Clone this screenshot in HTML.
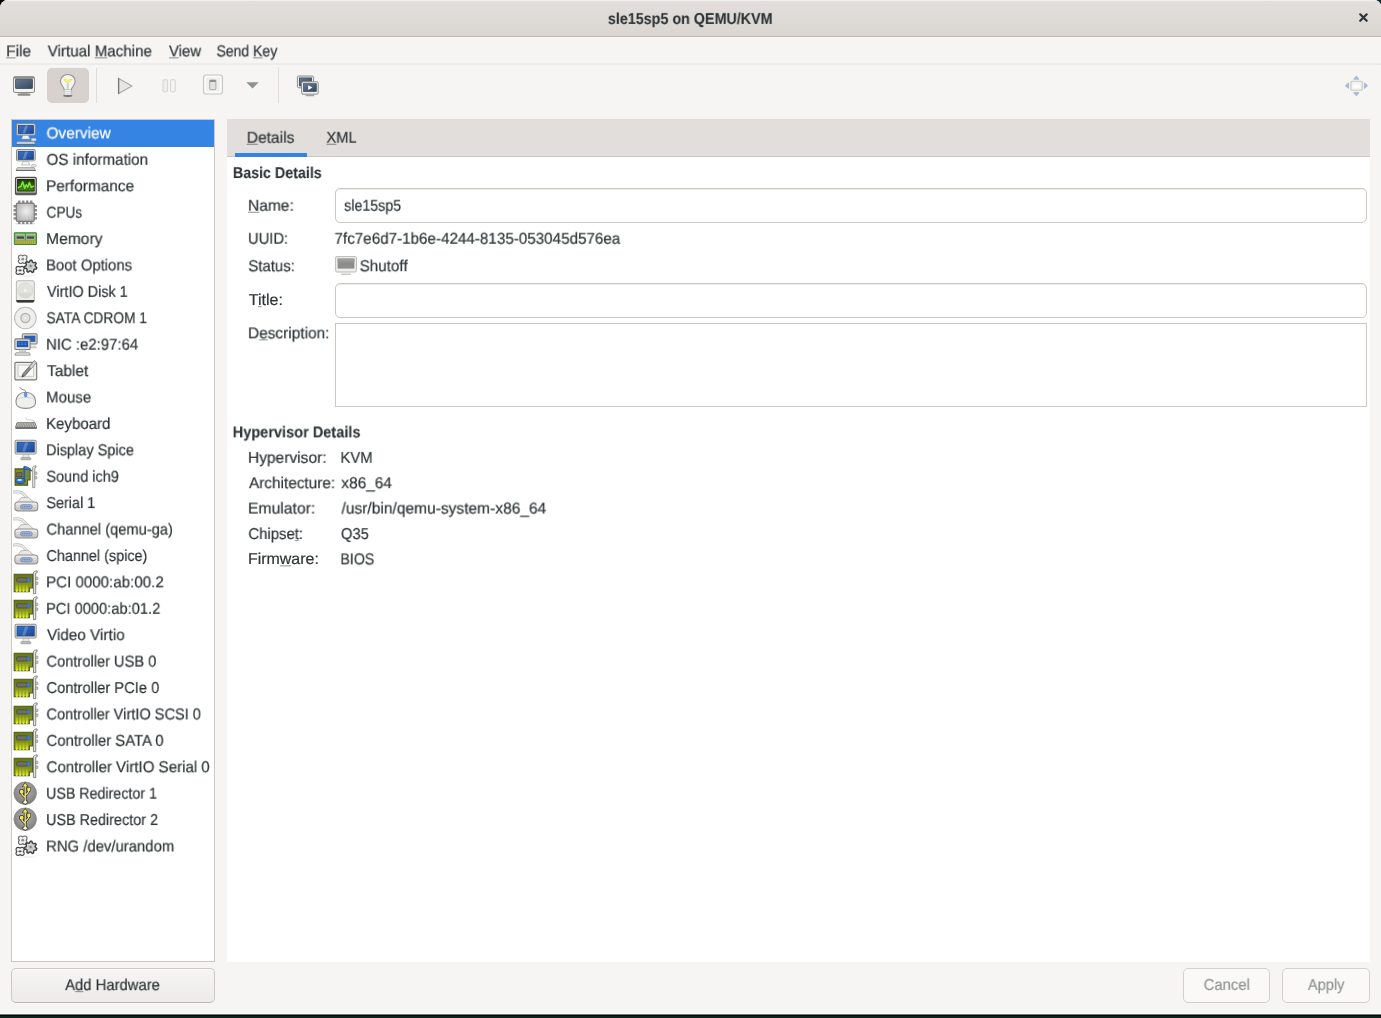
<!DOCTYPE html>
<html lang="en">
<head>
<meta charset="utf-8">
<title>sle15sp5 on QEMU/KVM</title>
<style>
html,body{margin:0;padding:0;}
body{width:1381px;height:1018px;overflow:hidden;background:#000;font-family:"Liberation Sans",sans-serif;font-size:15.8px;color:#2e3436;}
#win{position:absolute;left:0;top:0;width:1381px;height:1018px;background:#f6f5f4;border-radius:8px 7px 0 0 / 8px 6px 0 0;overflow:hidden;}
#win div,#win svg,#win span{position:absolute;}
.t{will-change:transform;text-rendering:geometricPrecision;-webkit-text-stroke:0.2px currentColor;line-height:20px;height:20px;white-space:pre;transform-origin:0 0;display:block;}
.t u{text-decoration:underline;text-decoration-thickness:1px;text-underline-offset:1px;text-decoration-color:rgba(46,52,54,.55);}
#titlebar{left:0;top:0;width:1381px;height:36px;background:linear-gradient(#e2dfdc,#dad6d2);border-bottom:1px solid #c3bab4;box-shadow:inset 0 1px 0 #f1f0ee;}
#menuline{left:0;top:63px;width:1381px;height:2px;background:linear-gradient(#eeedeb,#ecebe9);}
#tog{left:47px;top:68px;width:42px;height:35px;border-radius:5px;background:#d7d2ce;}
.vsep{top:68px;width:1px;height:35px;background:#dedbd8;}
#side{left:11px;top:119px;width:202px;height:841px;background:#fff;border:1px solid #cdc7c2;}
#sel{left:12px;top:120px;width:202px;height:26.5px;background:#3584e4;}
#nb{left:227px;top:119px;width:1143px;height:843px;background:#fff;}
#nbh{left:227px;top:119px;width:1143px;height:37px;background:#e1dedb;border-bottom:1px solid #cdc7c2;}
#tabsel{left:235px;top:153px;width:72px;height:4px;background:#3584e4;}
.entry{background:#fff;border:1px solid #cdc7c2;border-radius:5px;box-sizing:border-box;box-shadow:inset 0 1px 0 #eeecea;}
.btn{box-sizing:border-box;border:1px solid #cdc7c2;border-bottom-color:#bfb8b1;border-radius:5px;background:linear-gradient(#f6f5f4,#edebe9);box-shadow:inset 0 1px 0 #fff;}
.btn.dis{background:#faf9f8;border-color:#d5d0cc;box-shadow:none;}
#bottomline{left:0;top:1013px;width:1381px;height:5px;background:linear-gradient(#fcfcfb 0,#fcfcfb 1px,#777 1px,#777 2px,#020a09 2px,#020a09 3px,#0a2420 3px);}
</style>
</head>
<body>
<svg width="0" height="0" style="position:absolute"><defs><linearGradient id="gScr" x1="0" y1="0" x2="1" y2="1"><stop offset="0" stop-color="#3a6fc4"/><stop offset=".5" stop-color="#2a5fb4"/><stop offset="1" stop-color="#1a4394"/></linearGradient>
<linearGradient id="gFrm" x1="0" y1="0" x2="0" y2="1"><stop offset="0" stop-color="#f4f4f2"/><stop offset="1" stop-color="#d3d3cf"/></linearGradient>
<linearGradient id="gDark" x1="0" y1="0" x2="1" y2="1"><stop offset="0" stop-color="#6a7c92"/><stop offset="1" stop-color="#32465e"/></linearGradient>
<radialGradient id="gChip" cx=".55" cy=".45" r=".7"><stop offset="0" stop-color="#f2f2f2"/><stop offset="1" stop-color="#a9a9a9"/></radialGradient>
<radialGradient id="gUsb" cx=".5" cy=".4" r=".6"><stop offset="0" stop-color="#b4b4b4"/><stop offset="1" stop-color="#7d7d7d"/></radialGradient>
<linearGradient id="gPci" x1="0" y1="0" x2="0" y2="1"><stop offset="0" stop-color="#667614"/><stop offset=".5" stop-color="#7f8f1a"/><stop offset="1" stop-color="#98a81c"/></linearGradient>
<linearGradient id="gYel" gradientUnits="userSpaceOnUse" x1="0" y1="14" x2="0" y2="21"><stop offset="0" stop-color="#b8c822" stop-opacity=".3"/><stop offset="1" stop-color="#f0fa3c"/></linearGradient>
<linearGradient id="gGrn" x1="0" y1="0" x2="0" y2="1"><stop offset="0" stop-color="#1d3a0a"/><stop offset="1" stop-color="#3f8a12"/></linearGradient>
<linearGradient id="gCon" x1="0" y1="0" x2="0" y2="1"><stop offset="0" stop-color="#f4f4f4"/><stop offset="1" stop-color="#bdbdbd"/></linearGradient>
<symbol id="i-computer" viewBox="0 0 24 24" overflow="visible"><g transform="translate(0.1 -0.2)"><g><rect x="3.2" y="2.7" width="17.7" height="10.5" rx="1.3" fill="url(#gFrm)" stroke="#8a8a85" stroke-width="1"/>
<path d="M3.4 12.2h17.300v.6a.8.800 0 0 1-.8.800H4.200a.8.800 0 0 1-.8-.8z" fill="#b9b9b4"/>
<rect x="4.800" y="4.300" width="14.500" height="7.600" fill="url(#gScr)" stroke="#15336e" stroke-width=".6"/>
<path d="M11.400 4.500h2.800l-2.800 7.200H9z" fill="#fff" opacity=".25"/>
<path d="M9.300 14h5.200l1.300 3.300H8z" fill="#f4f4f2" stroke="#a4a4a0" stroke-width=".6"/>
<ellipse cx="19.500" cy="17.900" rx="2.500" ry="1.300" fill="#e4e6ea" stroke="#a9adb6" stroke-width=".6"/>
<path d="M4 19.800h15.800l1.400 2.600H2.800z" fill="#ecece9" stroke="#8a8a86" stroke-width=".8"/>
<path d="M4.600 20.700h14.600M4.200 21.500h15.400" stroke="#a7a7a3" stroke-width=".5" stroke-dasharray="1 .5"/>
<path d="M2.800 22.400h18.400" stroke="#5e5e5b" stroke-width=".8"/></g></g></symbol>
<symbol id="i-perf" viewBox="0 0 24 24" overflow="visible"><g transform="translate(0.5 -0.3)"><rect x="1.900" y="4.400" width="19.600" height="16.300" rx="1.300" fill="#d4d4d2" stroke="#4c4c4a" stroke-width="1.200"/>
<path d="M1.900 18.800h19.600v1a1.300 1.300 0 0 1-1.300 1.300H3.200a1.300 1.300 0 0 1-1.300-1.300z" fill="#5a5a58"/>
<rect x="3.900" y="6.400" width="15.600" height="11" fill="url(#gGrn)" stroke="#0c1a05" stroke-width=".8"/>
<path d="M4.700 14l2.300-.9 1.700-4.500 1.800 6.200 1.500-3.300 1.500 2.200 1.500-4.300 1.700 4.400 2.200-1" fill="none" stroke="#7fe33a" stroke-width="1.500" stroke-linejoin="round" stroke-linecap="round"/></g></symbol>
<symbol id="i-cpu" viewBox="0 0 24 24" overflow="visible"><g transform="translate(0.19 -0.09)"><ellipse cx="11.300" cy="22.600" rx="10" ry="1" fill="#000" opacity=".12"/>
<g fill="#8a8a8a">
<path d="M4.600.5h2.200v4H4.600zM8.400.5h2.200v4H8.400zM12.200.5h2.200v4h-2.200zM16 .5h2.200v4H16zM4.600 18.800h2.200v4H4.600zM8.400 18.800h2.200v4H8.400zM12.200 18.800h2.200v4h-2.200zM16 18.800h2.200v4H16z"/>
<path d="M.3 4.900h4v2.200h-4zM.3 8.700h4v2.200h-4zM.3 12.500h4v2.200h-4zM.3 16.300h4v2.200h-4zM18.500 4.900h4v2.200h-4zM18.500 8.700h4v2.200h-4zM18.500 12.500h4v2.200h-4zM18.500 16.300h4v2.200h-4z"/>
</g>
<rect x="2.900" y="3.100" width="17" height="17.200" rx="1.400" fill="url(#gChip)" stroke="#7a7a7a" stroke-width="1.100"/></g></symbol>
<symbol id="i-memory" viewBox="0 0 24 24" overflow="visible"><g transform="translate(0.4 0.09) scale(0.9858)"><rect x=".9" y="6.500" width="21.200" height="11.200" rx=".8" fill="#6fb55e" stroke="#3a8a2c" stroke-width="1"/>
<rect x="1.800" y="7.400" width="19.400" height=".9" fill="#a9d89c"/>
<rect x="2.600" y="9" width="8" height="3.500" fill="#4a4644" stroke="#d8d4d0" stroke-width=".6"/>
<rect x="2.600" y="9" width="8" height="1" fill="#9a9694"/>
<rect x="12.400" y="9" width="8" height="3.500" fill="#4a4644" stroke="#d8d4d0" stroke-width=".6"/>
<rect x="12.400" y="9" width="8" height="1" fill="#9a9694"/>
<rect x="11" y="6.900" width="1" height="7" fill="#2fa42a"/>
<rect x="2" y="13.900" width="19" height="3.200" fill="#b9b548"/>
<path d="M3.300 13.900v3.200M5.300 13.900v3.200M7.300 13.900v3.200M9.300 13.900v3.200M11.300 13.900v3.200M13.300 13.900v3.200M15.300 13.900v3.200M17.300 13.900v3.200M19.300 13.900v3.200" stroke="#8f8a30" stroke-width=".6"/></g></symbol>
<symbol id="i-gears" viewBox="0 0 24 24" overflow="visible"><g transform=""><ellipse cx="13" cy="21.800" rx="9" ry="1" fill="#000" opacity=".05"/>
<circle cx="7.30" cy="4.00" r="2.65" fill="#707070"/><circle cx="11.10" cy="4.00" r="2.65" fill="#707070"/><circle cx="7.30" cy="7.80" r="2.65" fill="#707070"/><circle cx="11.10" cy="7.80" r="2.65" fill="#707070"/><rect x="7.30" y="4.00" width="3.80" height="3.80" fill="#707070"/><circle cx="7.30" cy="4.00" r="1.55" fill="#f2f2f2"/><circle cx="11.10" cy="4.00" r="1.55" fill="#f2f2f2"/><circle cx="7.30" cy="7.80" r="1.55" fill="#f2f2f2"/><circle cx="11.10" cy="7.80" r="1.55" fill="#f2f2f2"/><rect x="6.55" y="3.25" width="5.30" height="5.30" fill="#f2f2f2"/>
<circle cx="9.200" cy="5.900" r="1.300" fill="#8c8c8c"/>
<path d="M22.50 13.80L22.11 15.06L20.21 15.30L19.55 16.01L19.45 17.92L18.22 18.40L16.86 17.06L15.88 16.99L14.34 18.11L13.19 17.44L13.39 15.55L12.84 14.74L11.00 14.22L10.80 12.92L12.41 11.88L12.70 10.95L11.96 9.19L12.86 8.22L14.66 8.84L15.57 8.48L16.48 6.80L17.80 6.90L18.45 8.70L19.30 9.19L21.18 8.86L21.92 9.95L20.92 11.57L21.06 12.54Z" fill="#d6d9d4" stroke="#3e4245" stroke-width="1.400" stroke-linejoin="round"/>
<circle cx="16.700" cy="12.700" r="2.600" fill="#c4c8c2"/>
<circle cx="16.700" cy="12.300" r="1.100" fill="#7c8084"/>
<circle cx="4.90" cy="14.60" r="2.55" fill="#484848"/><circle cx="8.50" cy="14.60" r="2.55" fill="#484848"/><circle cx="4.90" cy="18.20" r="2.55" fill="#484848"/><circle cx="8.50" cy="18.20" r="2.55" fill="#484848"/><rect x="4.90" y="14.60" width="3.60" height="3.60" fill="#484848"/><circle cx="4.90" cy="14.60" r="1.45" fill="#f4f4f4"/><circle cx="8.50" cy="14.60" r="1.45" fill="#f4f4f4"/><circle cx="4.90" cy="18.20" r="1.45" fill="#f4f4f4"/><circle cx="8.50" cy="18.20" r="1.45" fill="#f4f4f4"/><rect x="4.15" y="13.85" width="5.10" height="5.10" fill="#f4f4f4"/>
<rect x="5.300" y="15.600" width="2.800" height="1.700" rx=".4" fill="#4a4a4a"/></g></symbol>
<symbol id="i-disk" viewBox="0 0 24 24" overflow="visible"><g transform="translate(-0.38 0.09) scale(0.9858)"><rect x="3.600" y="1.600" width="17.200" height="20.600" rx="1.600" fill="#ececea" stroke="#b9b9b5" stroke-width="1"/>
<path d="M3.600 20h17.200v.8a1.600 1.600 0 0 1-1.600 1.600H5.200a1.600 1.600 0 0 1-1.600-1.600z" fill="#3a3a3c"/>
<circle cx="12.200" cy="11" r="7.200" fill="#e2e2df" stroke="#d2d2ce" stroke-width=".6"/>
<path d="M5.500 13.500a7.200 7.200 0 0 0 13.400 0" fill="#d4d4d0" opacity=".7"/>
<circle cx="12.200" cy="11" r="1.200" fill="#f8f8f8"/></g></symbol>
<symbol id="i-cdrom" viewBox="0 0 24 24" overflow="visible"><g transform="translate(-0.38 0.09) scale(0.9858)"><circle cx="12.300" cy="12.400" r="10.400" fill="#efefed" stroke="#bcbcb9" stroke-width="1"/>
<circle cx="12.300" cy="12.400" r="4.300" fill="#e6e6e4" stroke="#b4b4b1" stroke-width="1.300"/>
<circle cx="12.300" cy="12.400" r="1.500" fill="#fafafa" stroke="#cfcfcc" stroke-width=".6"/></g></symbol>
<symbol id="i-nic" viewBox="0 0 24 24" overflow="visible"><g transform="translate(0.19 -0.09)"><rect x="8.6" y="1.8" width="14" height="9.6" rx="1" fill="#d8d8d4" stroke="#7e7e7a" stroke-width="1"/>
<rect x="10.4" y="3.6" width="10.6" height="5.8" fill="#2a5cb0"/>
<path d="M13 13.5h8l1 1.6h-9z" fill="#e8e8e6" stroke="#a0a09c" stroke-width=".5"/>
<rect x="1.6" y="6.6" width="14.4" height="10" rx="1" fill="#e2e2de" stroke="#7e7e7a" stroke-width="1"/>
<rect x="3.4" y="8.4" width="10.8" height="6" fill="#2458b0"/>
<path d="M4.5 10.4h8M4.5 12h8" stroke="#5d8ad8" stroke-width=".7" stroke-dasharray="2 1"/>
<path d="M6.5 17h5l.6 1.6H5.9z" fill="#e4e4e2" stroke="#a0a09c" stroke-width=".5"/>
<path d="M2.6 19.8h12.6l1 2.2H1.6z" fill="#eeeeec" stroke="#8a8a86" stroke-width=".8"/></g></symbol>
<symbol id="i-tablet" viewBox="0 0 24 24" overflow="visible"><g transform="translate(0.19 -0.09)"><rect x="1.6" y="4.2" width="20.6" height="16.6" rx="1.2" fill="#eeeeec" stroke="#7b7b78" stroke-width="1.1"/>
<rect x="4.6" y="6.8" width="14.6" height="10.6" fill="#f8f8f6" stroke="#c4c4c0" stroke-width=".8"/>
<path d="M8.2 18.2l1-3.2L20 2.6l2 1.6L11.2 16.8z" fill="#8a8a88" stroke="#5e5e5c" stroke-width=".7"/>
<path d="M15.2 8.6L20 2.6l2 1.6-4.8 6z" fill="#d2d4d8" stroke="#8a8e96" stroke-width=".7"/>
<path d="M8.2 18.2l.6-2 1.2 1z" fill="#333"/></g></symbol>
<symbol id="i-mouse" viewBox="0 0 24 24" overflow="visible"><g transform="translate(0.19 -0.09)"><path d="M6 2.4c2 .4 1.4 2 3.6 2.2 1.6.2 2.2.8 2.2 2.4" fill="none" stroke="#7a7a78" stroke-width=".9"/>
<path d="M2.6 16.2C2.6 10.6 6.4 7 11.8 7s9.400 3.600 9.400 9.200c0 4.200-4.200 6-9.400 6s-9.200-1.800-9.200-6z" fill="#efefed" stroke="#8d8d8a" stroke-width="1"/>
<path d="M3.8 13.6c2.400-1.400 5-1.800 8-1.800s5.800.4 8.200 1.800" fill="none" stroke="#cfcfcc" stroke-width=".8"/>
<ellipse cx="11.800" cy="9.200" rx="1.300" ry="2.300" fill="#5f9be6" stroke="#3a74c4" stroke-width=".5"/></g></symbol>
<symbol id="i-keyboard" viewBox="0 0 24 24" overflow="visible"><g transform="translate(0.19 -0.09)"><path d="M11.500 6.400c3.500.6-1.500 1.400 2.500 2 4.500.7 6.500.2 6 1.600-.4 1-2.600.6-3.200 1.800" fill="none" stroke="#c4c4c1" stroke-width=".8"/>
<path d="M3.600 11.200h17l1.600 4.600H2.200z" fill="#e0e0dd" stroke="#6e6e6b" stroke-width=".9"/>
<path d="M4.400 12.400h15.600M3.900 13.500h16.600M3.500 14.600h17.400" stroke="#5a5a58" stroke-width=".8" stroke-dasharray="1.100 .5"/>
<path d="M2.200 15.900h20v1H2.200z" fill="#4e4e4c"/></g></symbol>
<symbol id="i-display" viewBox="0 0 24 24" overflow="visible"><g transform="translate(-0.38 0.09) scale(0.9858)"><rect x="2.400" y="2" width="20.200" height="13.200" rx="1.200" fill="url(#gFrm)" stroke="#8c8c88" stroke-width="1"/>
<path d="M2.900 13.400h19.200v1a.8.800 0 0 1-.8.800H3.700a.8.800 0 0 1-.8-.8z" fill="#c4c4c0"/>
<rect x="4.200" y="3.800" width="16.600" height="9.500" fill="url(#gScr)" stroke="#17397a" stroke-width=".6"/>
<path d="M12 4.100h3.300L12 13H9z" fill="#fff" opacity=".22"/>
<path d="M10.400 15.700h4.800l.9 3.300H9.500z" fill="#e8e8e6" stroke="#a4a4a0" stroke-width=".6"/>
<rect x="7.800" y="18.900" width="9.800" height="1.900" rx=".9" fill="#c8c8c5" stroke="#8c8c88" stroke-width=".7"/></g></symbol>
<symbol id="i-sound" viewBox="0 0 24 24" overflow="visible"><g transform="translate(-0.38 0.09) scale(0.9858)"><path d="M2.400 4.600h14.400v10.600h-2.400v5H2.400z" fill="#7f8e1e" stroke="#4d580d" stroke-width="1"/>
<rect x="4" y="8.300" width="5" height="4" fill="#6b6b66" stroke="#3f3f3c" stroke-width=".6"/>
<rect x="13.800" y="8" width="1.600" height="1.600" fill="#3f7fd0"/><rect x="13.800" y="11" width="1.600" height="1.600" fill="#3f7fd0"/>
<path d="M19.300 3.300c0-1 1.200-1.600 3.200-1.600v1.400l-1.200.4v19.100h-2z" fill="#ececea" stroke="#858582" stroke-width=".8"/>
<path d="M21.300 7.600h2v2.200h-2zM21.300 12h2v2.200h-2z" fill="#d8d8d6" stroke="#858582" stroke-width=".6"/>
<path d="M11.200 2.400v13.400" stroke="#2a5aae" stroke-width="1.700"/>
<path d="M11.200 2c2.800.2 5.400 1.600 7.400 4.800-2.400-1.600-4.800-2-7.400-1.600z" fill="#3f78cc" stroke="#1f4b96" stroke-width=".6"/>
<ellipse cx="7.400" cy="16" rx="4.600" ry="2.700" fill="#3570c6" stroke="#1a4490" stroke-width=".8"/>
<ellipse cx="6.800" cy="15.300" rx="2.400" ry="1" fill="#cfe0f8"/></g></symbol>
<symbol id="i-serial" viewBox="0 0 24 24" overflow="visible"><g transform="translate(-0.38 0.09) scale(0.9858)"><path d="M1.200 1.800c5.500-.8 8.500.6 10.600 3.400l3.200 4" fill="none" stroke="#bdbdba" stroke-width="2.800" stroke-linecap="round"/>
<path d="M1.200 1.800c5.500-.8 8.500.6 10.600 3.400l3.200 4" fill="none" stroke="#ededeb" stroke-width="1.400" stroke-linecap="round"/>
<path d="M8 7.400l7-.6 6.400 5.800H4.200z" fill="#e9e9e7" stroke="#adadaa" stroke-width=".8"/>
<rect x="2.200" y="11.400" width="22" height="8.600" rx="3" fill="url(#gCon)" stroke="#8e8e8b" stroke-width="1"/>
<rect x="7.600" y="14" width="11.200" height="4" rx="1.800" fill="#9fb3d6" stroke="#7488ae" stroke-width=".8"/>
<path d="M9.200 16h8" stroke="#5f78a8" stroke-width="1" stroke-dasharray="1 .6"/>
<circle cx="5" cy="15.800" r=".9" fill="#fafafa" stroke="#aaa" stroke-width=".4"/><circle cx="21.400" cy="15.800" r=".9" fill="#fafafa" stroke="#aaa" stroke-width=".4"/></g></symbol>
<symbol id="i-pci" viewBox="0 0 24 24" overflow="visible"><g transform="translate(-0.38 0.09) scale(0.9858)"><path d="M1.500 3.900h17.600v13.200h-3v3.600H1.500z" fill="url(#gPci)" stroke="#4f5c0c" stroke-width="1"/>
<rect x="3.800" y="7.300" width="10.600" height="4.200" rx="1.200" fill="#6c6e66" stroke="#454741" stroke-width=".7"/>
<rect x="13.800" y="7.500" width="3.200" height="3.800" rx=".6" fill="#3f7fd0" stroke="#2a5aa0" stroke-width=".5"/>
<path d="M4.100 20v-5.200M7.300 20v-5.200M10.500 20v-5.200M13.700 20v-5.200" stroke="url(#gYel)" stroke-width="2" stroke-linecap="round"/>
<path d="M20 2.700c0-1 1.200-1.900 3.600-1.900v1.600l-1.400.5v19.700H20z" fill="#e4e4e2" stroke="#7d7d7a" stroke-width=".9"/>
<path d="M22.200 6.800h2v2.300h-2zM22.200 11.400h2v2.300h-2z" fill="#d4d4d2" stroke="#7d7d7a" stroke-width=".6"/></g></symbol>
<symbol id="i-usb" viewBox="0 0 24 24" overflow="visible"><g transform="translate(-0.38 0.09) scale(0.9858)"><circle cx="12.100" cy="11.600" r="10.800" fill="url(#gUsb)" stroke="#8a8a8a" stroke-width=".8"/>
<g fill="none" stroke="#35352c" stroke-linecap="round"><path d="M12.100 20.500V4.500" stroke-width="2.600"/><path d="M12.100 15.400c-3.200-1.400-3.400-2.600-3.400-4.600M12.100 13.400c3.200-1.400 3.400-3 3.400-5" stroke-width="2.400"/></g>
<g fill="#35352c"><path d="M12.100.9l3.300 4.700H8.800z"/><circle cx="8.700" cy="10.200" r="2.500"/><rect x="13.500" y="5.800" width="4.200" height="4.200" rx="1"/><path d="M12.100 17.500l3.200 2.700-3.200 2.700-3.200-2.700z"/></g>
<g fill="none" stroke="#f0e88c" stroke-linecap="round"><path d="M12.100 20.500V4.500" stroke-width="1.200"/><path d="M12.100 15.400c-3.200-1.400-3.400-2.600-3.400-4.600M12.100 13.400c3.200-1.400 3.400-3 3.400-5" stroke-width="1.100"/></g>
<path d="M12.100 1.800l2.300 3.300H9.800z" fill="#f6e65a"/>
<circle cx="8.700" cy="10.200" r="1.800" fill="#f6e65a"/>
<rect x="14.100" y="6.400" width="3" height="3" rx=".6" fill="#f6e65a"/>
<path d="M12.100 18.300l2.300 1.900-2.300 1.900-2.300-1.900z" fill="#fbf8d8"/></g></symbol>
</defs></svg>
<div style="position:absolute;right:0;top:0;width:8px;height:8px;background:linear-gradient(225deg,#0a2e28 0,#0a2e28 35%,#000 60%)"></div>
<div id="win">
<div id="titlebar"></div>
<svg style="left:1357px;top:11.200px" width="13" height="13" viewBox="0 0 13 13"><path d="M3.200 3.300l6.500 6.500M9.700 3.300l-6.500 6.500" stroke="#2e3436" stroke-width="2.200" stroke-linecap="round"/></svg>
<div id="menuline"></div>
<div id="tog"></div>
<div class="vsep" style="left:96px"></div>
<div class="vsep" style="left:278px"></div>
<!-- toolbar icons -->
<svg id="tb-console" style="left:12px;top:74px" width="24" height="24" viewBox="0 0 24 24">
<rect x="1.500" y="2.700" width="21" height="15.800" rx="1.500" fill="#f2f2f0" stroke="#8b8b88" stroke-width="1"/>
<rect x="1.500" y="2.700" width="21" height="2" rx="1" fill="#8e8e8b"/>
<rect x="3.500" y="5.200" width="17" height="9.300" rx=".6" fill="url(#gDark)" stroke="#2c3e55" stroke-width=".7"/>
<rect x="9" y="18.500" width="6" height="1.200" fill="#9a9a97"/>
<rect x="5.500" y="19.600" width="13" height="2.200" rx="1" fill="#8a8a87"/>
</svg>
<svg id="tb-bulb" style="left:58px;top:73px" width="20" height="25" viewBox="0 0 20 25">
<ellipse cx="9.800" cy="22.800" rx="4.600" ry=".9" fill="#2e3436" opacity=".8"/>
<path d="M9.800 1.500c-4.300 0-7.400 3-7.400 6.800 0 2.500 1.300 4.100 2.600 5.700.9 1.100 1.300 2 1.300 3.200h7c0-1.200.4-2.100 1.300-3.200 1.300-1.600 2.600-3.200 2.600-5.700 0-3.800-3.100-6.800-7.400-6.800z" fill="#f4f4f2" stroke="#929290" stroke-width="1.100"/>
<path d="M5.400 6.600c1.200-1.500 3-.7 4.400 1 1.400-1.700 3.200-2.500 4.400-1-.6 2-2.400 3-4.400 3s-3.800-1-4.400-3z" fill="#f0e84e"/>
<path d="M7 7.400c1-.4 2 .3 2.800 1.300.8-1 1.800-1.700 2.800-1.300" fill="none" stroke="#fffbd0" stroke-width=".8"/>
<path d="M8.800 10.600l1-1.800 1 1.800v5.600h-2z" fill="#c9c9c5" opacity=".8"/>
<rect x="6.200" y="16.600" width="7.200" height="5.400" rx="1.200" fill="#fafafa" stroke="#b1b1ae" stroke-width=".7"/>
<path d="M6.400 18.400h6.800M6.400 20.100h6.800" stroke="#c4c4c1" stroke-width=".7"/>
</svg>
<svg id="tb-play" style="left:116px;top:76px" width="18" height="20" viewBox="0 0 18 20">
<path d="M2.600 2.400L16 10 2.600 17.600z" fill="#e6e6e4" stroke="#a9a9a6" stroke-width="1.100" stroke-linejoin="round"/>
<path d="M2.600 2.400v15.200" stroke="#777775" stroke-width="1.300" stroke-linecap="round"/>
</svg>
<svg id="tb-pause" style="left:161px;top:78px" width="16" height="16" viewBox="0 0 16 16">
<rect x="2" y="1.800" width="4.600" height="12" rx=".8" fill="#eeeeec" stroke="#cfcfcc" stroke-width=".9"/>
<rect x="9.600" y="1.800" width="4.600" height="12" rx=".8" fill="#f4f4f2" stroke="#cfcfcc" stroke-width=".9"/>
</svg>
<svg id="tb-power" style="left:202px;top:73px" width="22" height="23" viewBox="0 0 22 23">
<rect x="1.600" y="2" width="18.800" height="19" rx="2.400" fill="#fbfbfa" stroke="#c3c3c0" stroke-width="1.100"/>
<rect x="4" y="4.400" width="14" height="14.200" rx="1" fill="#f0f0ee"/>
<rect x="7.700" y="7" width="6.200" height="9.600" rx=".8" fill="#e2e2e0" stroke="#a4a4a1" stroke-width=".9"/>
<rect x="7.700" y="7" width="6.200" height="2" rx=".6" fill="#8f8f8c"/>
</svg>
<svg id="tb-arrow" style="left:246px;top:82px" width="13" height="7" viewBox="0 0 13 7"><path d="M.3.300h12.400L6.500 6.600z" fill="#8e9192"/></svg>
<svg id="tb-multi" style="left:296px;top:74px" width="24" height="24" viewBox="0 0 24 24">
<rect x="1.400" y="2" width="16.200" height="11.800" rx="1.400" fill="#e8e8e6" stroke="#8c8c89" stroke-width="1"/>
<rect x="3.300" y="3.900" width="12.400" height="8" fill="url(#gDark)" stroke="#2c3e55" stroke-width=".6"/>
<rect x="5.600" y="7.800" width="16.600" height="12.400" rx="1.400" fill="#efefed" stroke="#8c8c89" stroke-width="1"/>
<rect x="7.500" y="9.700" width="12.800" height="7.800" fill="url(#gDark)" stroke="#2c3e55" stroke-width=".6"/>
<path d="M12.200 11.300l4.200 2.300-4.200 2.300z" fill="#fff"/>
<rect x="9.600" y="20.800" width="8.600" height="1.400" rx=".6" fill="#a2a29f"/>
</svg>
<svg id="tb-full" style="left:1344px;top:74px" width="25" height="24" viewBox="0 0 25 24">
<g fill="#a9bcdc" stroke="#a9bcdc" stroke-width="1.400" stroke-linejoin="round"><path d="M12.300 2.500l2.300 2.600H10zM12.300 21.300L10 18.700h4.600zM1.800 11.700l2.600-2.400v4.800zM23.200 11.700l-2.600 2.400V9.300z"/></g>
<rect x="6.900" y="7.200" width="11.300" height="9.100" rx="1" fill="#f3f3f1" stroke="#c6c6c3" stroke-width="1.100"/>
<rect x="9.300" y="10.600" width="6.400" height="3.200" fill="#fdfdfd"/>
</svg>

<div id="side"></div>
<div id="sel"></div>
<svg class="ic" style="left:13.4px;top:120.60px" width="25.36" height="25.36" viewBox="0 0 24 24"><use href="#i-computer"/></svg>
<svg class="ic" style="left:13.4px;top:147.01px" width="25.36" height="25.36" viewBox="0 0 24 24"><use href="#i-computer"/></svg>
<svg class="ic" style="left:13.4px;top:173.42px" width="25.36" height="25.36" viewBox="0 0 24 24"><use href="#i-perf"/></svg>
<svg class="ic" style="left:13.4px;top:199.83px" width="25.36" height="25.36" viewBox="0 0 24 24"><use href="#i-cpu"/></svg>
<svg class="ic" style="left:13.4px;top:226.24px" width="25.36" height="25.36" viewBox="0 0 24 24"><use href="#i-memory"/></svg>
<svg class="ic" style="left:13.4px;top:252.65px" width="25.36" height="25.36" viewBox="0 0 24 24"><use href="#i-gears"/></svg>
<svg class="ic" style="left:13.4px;top:279.06px" width="25.36" height="25.36" viewBox="0 0 24 24"><use href="#i-disk"/></svg>
<svg class="ic" style="left:13.4px;top:305.47px" width="25.36" height="25.36" viewBox="0 0 24 24"><use href="#i-cdrom"/></svg>
<svg class="ic" style="left:13.4px;top:331.88px" width="25.36" height="25.36" viewBox="0 0 24 24"><use href="#i-nic"/></svg>
<svg class="ic" style="left:13.4px;top:358.29px" width="25.36" height="25.36" viewBox="0 0 24 24"><use href="#i-tablet"/></svg>
<svg class="ic" style="left:13.4px;top:384.70px" width="25.36" height="25.36" viewBox="0 0 24 24"><use href="#i-mouse"/></svg>
<svg class="ic" style="left:13.4px;top:411.11px" width="25.36" height="25.36" viewBox="0 0 24 24"><use href="#i-keyboard"/></svg>
<svg class="ic" style="left:13.4px;top:437.52px" width="25.36" height="25.36" viewBox="0 0 24 24"><use href="#i-display"/></svg>
<svg class="ic" style="left:13.4px;top:463.93px" width="25.36" height="25.36" viewBox="0 0 24 24"><use href="#i-sound"/></svg>
<svg class="ic" style="left:13.4px;top:490.34px" width="25.36" height="25.36" viewBox="0 0 24 24"><use href="#i-serial"/></svg>
<svg class="ic" style="left:13.4px;top:516.75px" width="25.36" height="25.36" viewBox="0 0 24 24"><use href="#i-serial"/></svg>
<svg class="ic" style="left:13.4px;top:543.16px" width="25.36" height="25.36" viewBox="0 0 24 24"><use href="#i-serial"/></svg>
<svg class="ic" style="left:13.4px;top:569.57px" width="25.36" height="25.36" viewBox="0 0 24 24"><use href="#i-pci"/></svg>
<svg class="ic" style="left:13.4px;top:595.98px" width="25.36" height="25.36" viewBox="0 0 24 24"><use href="#i-pci"/></svg>
<svg class="ic" style="left:13.4px;top:622.39px" width="25.36" height="25.36" viewBox="0 0 24 24"><use href="#i-display"/></svg>
<svg class="ic" style="left:13.4px;top:648.80px" width="25.36" height="25.36" viewBox="0 0 24 24"><use href="#i-pci"/></svg>
<svg class="ic" style="left:13.4px;top:675.21px" width="25.36" height="25.36" viewBox="0 0 24 24"><use href="#i-pci"/></svg>
<svg class="ic" style="left:13.4px;top:701.62px" width="25.36" height="25.36" viewBox="0 0 24 24"><use href="#i-pci"/></svg>
<svg class="ic" style="left:13.4px;top:728.03px" width="25.36" height="25.36" viewBox="0 0 24 24"><use href="#i-pci"/></svg>
<svg class="ic" style="left:13.4px;top:754.44px" width="25.36" height="25.36" viewBox="0 0 24 24"><use href="#i-pci"/></svg>
<svg class="ic" style="left:13.4px;top:780.85px" width="25.36" height="25.36" viewBox="0 0 24 24"><use href="#i-usb"/></svg>
<svg class="ic" style="left:13.4px;top:807.26px" width="25.36" height="25.36" viewBox="0 0 24 24"><use href="#i-usb"/></svg>
<svg class="ic" style="left:13.4px;top:833.67px" width="25.36" height="25.36" viewBox="0 0 24 24"><use href="#i-gears"/></svg>
<div id="nb"></div>
<div id="nbh"></div>
<div id="tabsel"></div>
<div class="entry" style="left:335px;top:188px;width:1032px;height:35px"></div>
<svg id="st-icon" style="left:334px;top:254px" width="24" height="24" viewBox="0 0 24 24">
<rect x="1.600" y="2.600" width="20.800" height="15.400" rx="1.400" fill="#f0f0ee" stroke="#b9b9b6" stroke-width="1"/>
<rect x="3.600" y="4.600" width="16.800" height="10" fill="#8e8e8e"/>
<rect x="3.600" y="4.600" width="16.800" height="3" fill="#9c9c9c"/>
<rect x="7" y="19.400" width="10" height="1.600" rx=".7" fill="#c8c8c5"/>
</svg>
<div class="entry" style="left:335px;top:283px;width:1032px;height:35px"></div>
<div style="left:335px;top:323px;width:1032px;height:84px;box-sizing:border-box;background:#fff;border:1px solid #cdc7c2"></div>
<div class="btn" style="left:11px;top:968px;width:204px;height:35px"></div>
<div class="btn dis" style="left:1183px;top:968px;width:87px;height:35px"></div>
<div class="btn dis" style="left:1282px;top:968px;width:88px;height:35px"></div>
<div id="bottomline"></div>
<span class="t" style="left:607px;top:9px;transform:translate(0.86px,0.93px) scale(0.9065,1);font-weight:bold;-webkit-text-stroke-width:0.1px;">sle15sp5 on QEMU/KVM</span>
<span class="t" style="left:6px;top:42px;transform:translate(0.12px,0.33px) scale(0.9753,1);"><u>F</u>ile</span>
<span class="t" style="left:47px;top:42px;transform:translate(0.72px,0.33px) scale(0.9599,1);">Virtual <u>M</u>achine</span>
<span class="t" style="left:168px;top:42px;transform:translate(0.92px,0.33px) scale(0.9486,1);"><u>V</u>iew</span>
<span class="t" style="left:216px;top:42px;transform:translate(0.54px,0.33px) scale(0.8852,1);">Send <u>K</u>ey</span>
<span class="t" style="left:246px;top:128px;transform:translate(0.72px,0.73px) scale(0.9864,1);"><u>D</u>etails</span>
<span class="t" style="left:326px;top:128px;transform:translate(0.45px,0.73px) scale(0.9262,1);"><u>X</u>ML</span>
<span class="t" style="left:46px;top:124px;transform:translate(0.50px,0.38px) scale(0.9739,1);color:#ffffff;">Overview</span>
<span class="t" style="left:46px;top:150px;transform:translate(0.50px,0.79px) scale(0.9642,1);">OS information</span>
<span class="t" style="left:46px;top:177px;transform:translate(0.02px,0.20px) scale(0.9732,1);">Performance</span>
<span class="t" style="left:46px;top:203px;transform:translate(0.48px,0.61px) scale(0.8653,1);">CPUs</span>
<span class="t" style="left:46px;top:230px;transform:translate(0.02px,0.02px) scale(0.9887,1);">Memory</span>
<span class="t" style="left:46px;top:256px;transform:translate(0.03px,0.43px) scale(0.9417,1);">Boot Options</span>
<span class="t" style="left:47px;top:282px;transform:translate(0.02px,0.84px) scale(0.9135,1);">VirtIO Disk 1</span>
<span class="t" style="left:46px;top:309px;transform:translate(0.44px,0.25px) scale(0.8720,1);">SATA CDROM 1</span>
<span class="t" style="left:46px;top:335px;transform:translate(0.03px,0.66px) scale(0.9447,1);">NIC :e2:97:64</span>
<span class="t" style="left:46px;top:362px;transform:translate(0.93px,0.07px) scale(0.9819,1);">Tablet</span>
<span class="t" style="left:46px;top:388px;transform:translate(0.03px,0.48px) scale(0.9512,1);">Mouse</span>
<span class="t" style="left:46px;top:414px;transform:translate(0.03px,0.89px) scale(0.9536,1);">Keyboard</span>
<span class="t" style="left:46px;top:441px;transform:translate(0.04px,0.30px) scale(0.9177,1);">Display Spice</span>
<span class="t" style="left:46px;top:467px;transform:translate(0.39px,0.71px) scale(0.9167,1);">Sound ich9</span>
<span class="t" style="left:46px;top:494px;transform:translate(0.39px,0.12px) scale(0.9124,1);">Serial 1</span>
<span class="t" style="left:46px;top:520px;transform:translate(0.44px,0.53px) scale(0.9293,1);">Channel (qemu-ga)</span>
<span class="t" style="left:46px;top:546px;transform:translate(0.43px,0.94px) scale(0.9122,1);">Channel (spice)</span>
<span class="t" style="left:46px;top:573px;transform:translate(0.03px,0.35px) scale(0.9572,1);">PCI 0000:ab:00.2</span>
<span class="t" style="left:46px;top:599px;transform:translate(0.03px,0.76px) scale(0.9290,1);">PCI 0000:ab:01.2</span>
<span class="t" style="left:47px;top:626px;transform:translate(0.02px,0.17px) scale(0.9672,1);">Video Virtio</span>
<span class="t" style="left:46px;top:652px;transform:translate(0.44px,0.58px) scale(0.9275,1);">Controller USB 0</span>
<span class="t" style="left:46px;top:678px;transform:translate(0.44px,0.99px) scale(0.9309,1);">Controller PCIe 0</span>
<span class="t" style="left:46px;top:705px;transform:translate(0.43px,0.40px) scale(0.9229,1);">Controller VirtIO SCSI 0</span>
<span class="t" style="left:46px;top:731px;transform:translate(0.44px,0.81px) scale(0.9444,1);">Controller SATA 0</span>
<span class="t" style="left:46px;top:758px;transform:translate(0.44px,0.22px) scale(0.9557,1);">Controller VirtIO Serial 0</span>
<span class="t" style="left:46px;top:784px;transform:translate(0.06px,0.63px) scale(0.9016,1);">USB Redirector 1</span>
<span class="t" style="left:46px;top:811px;transform:translate(0.06px,0.04px) scale(0.9104,1);">USB Redirector 2</span>
<span class="t" style="left:46px;top:837px;transform:translate(0.03px,0.45px) scale(0.9420,1);">RNG /dev/urandom</span>
<span class="t" style="left:232px;top:164px;transform:translate(0.86px,0.03px) scale(0.9038,1);font-weight:bold;-webkit-text-stroke-width:0.1px;">Basic Details</span>
<span class="t" style="left:247px;top:196px;transform:translate(0.92px,0.73px) scale(0.9860,1);"><u>N</u>ame:</span>
<span class="t" style="left:344px;top:196px;transform:translate(0.17px,0.73px) scale(0.8991,1);">sle15sp5</span>
<span class="t" style="left:247px;top:229px;transform:translate(0.96px,0.73px) scale(0.9338,1);">UUID:</span>
<span class="t" style="left:334px;top:229px;transform:translate(0.48px,0.73px) scale(0.9627,1);">7fc7e6d7-1b6e-4244-8135-053045d576ea</span>
<span class="t" style="left:248px;top:257px;transform:translate(0.29px,0.23px) scale(0.9460,1);">Status:</span>
<span class="t" style="left:359px;top:257px;transform:translate(0.69px,0.23px) scale(0.9616,1);">Shutoff</span>
<span class="t" style="left:248px;top:291px;transform:translate(0.83px,0.13px) scale(1.0127,1);">T<u>i</u>tle:</span>
<span class="t" style="left:247px;top:324px;transform:translate(0.92px,0.33px) scale(0.9776,1);">D<u>e</u>scription:</span>
<span class="t" style="left:232px;top:423px;transform:translate(0.67px,0.33px) scale(0.9211,1);font-weight:bold;-webkit-text-stroke-width:0.1px;">Hypervisor Details</span>
<span class="t" style="left:247px;top:448px;transform:translate(0.92px,0.83px) scale(0.9841,1);">Hypervisor:</span>
<span class="t" style="left:340px;top:448px;transform:translate(0.43px,0.83px) scale(0.9427,1);">KVM</span>
<span class="t" style="left:248px;top:474px;transform:translate(0.97px,0.23px) scale(0.9714,1);">Architecture:</span>
<span class="t" style="left:341px;top:474px;transform:translate(0.30px,0.23px) scale(0.9769,1);">x86_64</span>
<span class="t" style="left:247px;top:499px;transform:translate(0.92px,0.53px) scale(0.9948,1);">Emulator:</span>
<span class="t" style="left:341px;top:499px;transform:translate(0.49px,0.53px) scale(0.9840,1);">/usr/bin/qemu-system-x86_64</span>
<span class="t" style="left:248px;top:525px;transform:translate(0.34px,0.03px) scale(0.9430,1);">Chipse<u>t</u>:</span>
<span class="t" style="left:340px;top:525px;transform:translate(0.90px,0.03px) scale(0.9393,1);">Q35</span>
<span class="t" style="left:247px;top:550px;transform:translate(0.92px,0.33px) scale(1.0095,1);">Firm<u>w</u>are:</span>
<span class="t" style="left:340px;top:550px;transform:translate(0.44px,0.33px) scale(0.8939,1);">BIOS</span>
<span class="t" style="left:65px;top:976px;transform:translate(0.17px,0.13px) scale(0.9370,1);">A<u>d</u>d Hardware</span>
<span class="t" style="left:1203px;top:975px;transform:translate(0.64px,0.93px) scale(0.9371,1);color:#929595;">Cancel</span>
<span class="t" style="left:1307px;top:975px;transform:translate(0.87px,0.93px) scale(0.9274,1);color:#929595;">Apply</span>
</div>
</body>
</html>
